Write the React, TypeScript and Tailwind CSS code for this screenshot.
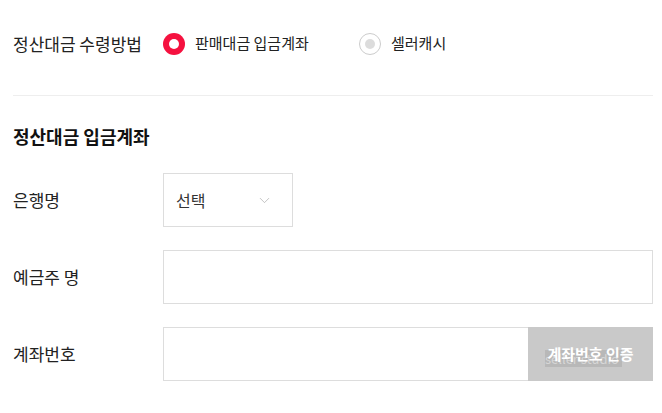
import { ChevronDown } from 'lucide-react';

const FONT = { fontFamily: '"Noto Sans CJK KR", "Noto Sans", sans-serif' };

function Row({ label, children }: { label: string; children: React.ReactNode }) {
    return (
        <div className="flex items-center">
            <div className="w-[150px] text-[17px] text-[#222]">{label}</div>
            {children}
        </div>
    );
}

export default function App() {
    return (
        <div className="w-[662px] h-[413px] bg-white pl-[13px] pr-[9px] pt-[26px]" style={FONT}>
            {/* 수령방법 */}
            <div className="flex items-center h-[36px] pb-[1px]">
                <div className="w-[150px] text-[17px] text-[#222]">정산대금 수령방법</div>
                <label className="flex items-center gap-[10px] w-[196px]">
                    <span className="w-[22px] h-[22px] rounded-full bg-[#f5113f] flex items-center justify-center">
                        <span className="w-[10px] h-[10px] rounded-full bg-white" />
                    </span>
                    <span className="text-[15px] text-[#222]">판매대금 입금계좌</span>
                </label>
                <label className="flex items-center gap-[10px]">
                    <span className="w-[22px] h-[22px] rounded-full border border-[#ccc] bg-white flex items-center justify-center">
                        <span className="w-[10px] h-[10px] rounded-full bg-[#dcdcdc]" />
                    </span>
                    <span className="text-[15px] text-[#222]">셀러캐시</span>
                </label>
            </div>

            <div className="border-t border-[#eee] mt-[33px]" />

            <h3 className="text-[18px] font-bold text-[#111] mt-[27px]">정산대금 입금계좌</h3>

            <div className="flex flex-col gap-[23px] mt-[23px]">
                <Row label="은행명">
                    <button className="w-[130px] h-[54px] border border-[#ddd] flex items-center justify-between pl-[12px] pr-[19px] text-[16px] text-[#333]">
                        <span>선택</span>
                        <ChevronDown className="w-[17px] h-[17px] text-[#aaa]" strokeWidth={1} />
                    </button>
                </Row>
                <Row label="예금주 명">
                    <input className="flex-1 h-[54px] border border-[#ddd] outline-none px-3" />
                </Row>
                <Row label="계좌번호">
                    <div className="flex flex-1 h-[54px]">
                        <input className="flex-1 h-full border border-[#ddd] border-r-0 outline-none px-3" />
                        <button className="relative w-[125px] h-full bg-[#c9c9c9] text-white text-[15px] font-semibold">
                            {/* watermark overlay */}
                            <span className="absolute left-[17px] top-[23px] w-[77px] h-[17px] bg-[#b8b8b8] text-[#d6d6d6] text-[13px] leading-[17px] font-normal text-left whitespace-nowrap">
                                seller studio
                            </span>
                            <span className="relative">계좌번호 인증</span>
                        </button>
                    </div>
                </Row>
            </div>
        </div>
    );
}
